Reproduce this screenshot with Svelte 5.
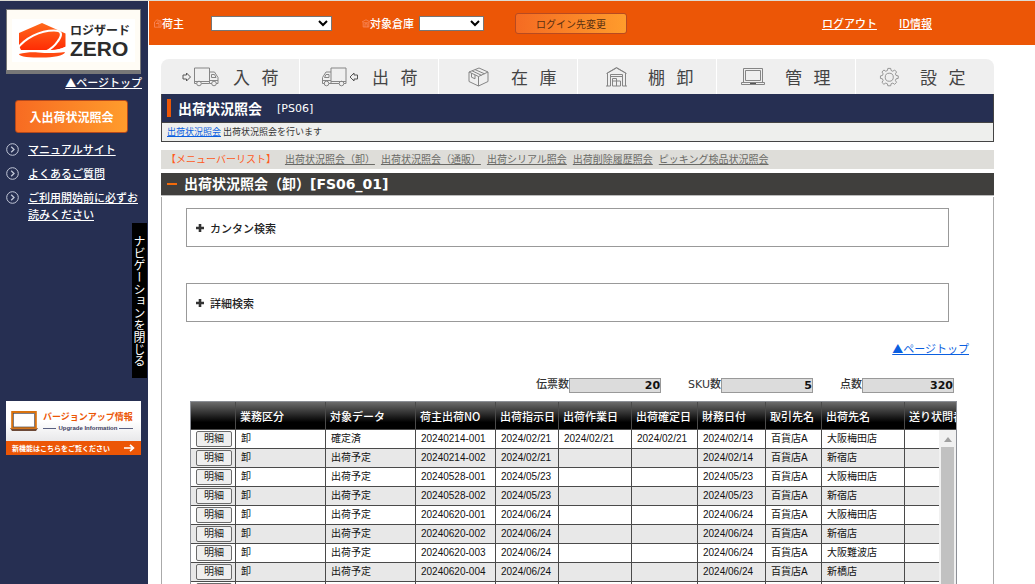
<script>
  // iconWidth sets how far the label sits from the left edge of its tab
  const tabs = [
    { icon: 'inbound', label: '入   荷', iconWidth: 40 },
    { icon: 'outbound', label: '出   荷', iconWidth: 40 },
    { icon: 'stock', label: '在   庫', iconWidth: 40 },
    { icon: 'shelf', label: '棚   卸', iconWidth: 38 },
    { icon: 'manage', label: '管   理', iconWidth: 36 },
    { icon: 'setting', label: '設   定', iconWidth: 32 }
  ]

  const sideLinks = [
    'マニュアルサイト',
    'よくあるご質問',
    'ご利用開始前に必ずお読みください'
  ]

  const menuLinks = [
    '出荷状況照会（卸）',
    '出荷状況照会（通販）',
    '出荷シリアル照会',
    '出荷削除履歴照会',
    'ピッキング検品状況照会'
  ]

  const totals = [
    { id: 'slips', label: '伝票数', value: '20' },
    { id: 'sku', label: 'SKU数', value: '5' },
    { id: 'pieces', label: '点数', value: '320' }
  ]

  const columns = [
    { title: '', width: 45 },
    { title: '業務区分', width: 90 },
    { title: '対象データ', width: 90 },
    { title: '荷主出荷NO', width: 80 },
    { title: '出荷指示日', width: 63 },
    { title: '出荷作業日', width: 73 },
    { title: '出荷確定日', width: 66 },
    { title: '財務日付', width: 68 },
    { title: '取引先名', width: 56 },
    { title: '出荷先名', width: 83 },
    { title: '送り状問番号', width: null }
  ]

  // kind, state, order no, instructed, worked, confirmed, finance, customer, destination, slip no
  const rows = [
    ['卸', '確定済', '20240214-001', '2024/02/21', '2024/02/21', '2024/02/21', '2024/02/14', '百貨店A', '大阪梅田店', ''],
    ['卸', '出荷予定', '20240214-002', '2024/02/21', '', '', '2024/02/14', '百貨店A', '新宿店', ''],
    ['卸', '出荷予定', '20240528-001', '2024/05/23', '', '', '2024/05/23', '百貨店A', '大阪梅田店', ''],
    ['卸', '出荷予定', '20240528-002', '2024/05/23', '', '', '2024/05/23', '百貨店A', '新宿店', ''],
    ['卸', '出荷予定', '20240620-001', '2024/06/24', '', '', '2024/06/24', '百貨店A', '大阪梅田店', ''],
    ['卸', '出荷予定', '20240620-002', '2024/06/24', '', '', '2024/06/24', '百貨店A', '新宿店', ''],
    ['卸', '出荷予定', '20240620-003', '2024/06/24', '', '', '2024/06/24', '百貨店A', '大阪難波店', ''],
    ['卸', '出荷予定', '20240620-004', '2024/06/24', '', '', '2024/06/24', '百貨店A', '新橋店', ''],
    ['', '', '', '', '', '', '', '', '', '']
  ]
</script>

<div class="page">
  <aside class="sidebar">
    <a class="logo" href="#top" aria-label="ロジザードZERO">
      <svg viewBox="0 0 123 43" width="123" height="43">
        <defs>
          <linearGradient id="logo-fill" x1="0" y1="0" x2="0" y2="1">
            <stop offset="0" stop-color="#ff6a1c" />
            <stop offset="1" stop-color="#ff2c04" />
          </linearGradient>
        </defs>
        <rect width="123" height="43" fill="#fff" />
        <path d="M7 14 30 4l23.500 10.500V28c-4 2-9 3-14 3H9L7 27Z" fill="url(#logo-fill)" />
        <path
          d="M5 30C13 19 28 11.500 42 11.500c9 0 8 5 4 10.500-3 4.500-7 8-12 10.500"
          fill="none"
          stroke="#fff"
          stroke-width="2.200"
        />
        <path d="M33 32.500c8-1 15-2 22-5.500v6H33Z" fill="#fff" />
        <path d="M7 35c6-1.500 13-2 19-1.500 9 .8 17 1 27-.5-1 4-12 5.500-23 5.500S7 38 7 35Z" fill="#ff4a12" />
        <text x="58" y="16" class="logo-kana">ロジザード</text>
        <text x="58" y="37" class="logo-zero">ZERO</text>
      </svg>
    </a>
    <a class="page-top" href="#top">▲ページトップ</a>
    <button class="side-button">入出荷状況照会</button>
    <ul class="side-links">
      {#each sideLinks as link}
        <li>
          <svg viewBox="0 0 13 13" width="13" height="13">
            <circle cx="6.5" cy="6.5" r="5.8" fill="none" stroke="#c3c8d8" />
            <path d="M5.2 3.8 8 6.5 5.2 9.2" fill="none" stroke="#c3c8d8" stroke-width="1.3" />
          </svg>
          <a href="#help">{link}</a>
        </li>
      {/each}
    </ul>
    <button class="nav-close">ナビゲーションを閉じる</button>
    <a class="banner" href="#upgrade">
      <span class="banner-top">
        <svg viewBox="0 0 28 20" width="28" height="20">
          <rect x="2.2" y="1" width="23.6" height="16" fill="#fff" stroke="#d9730f" stroke-width="2" />
          <rect x="3.6" y="2.4" width="20.8" height="13.6" fill="#fff" stroke="#4a4a55" stroke-width=".7" />
          <path d="M0 17h28l-2 3H2Z" fill="#6d4a38" />
          <path d="M1 17.4h26" stroke="#e07a1a" />
        </svg>
        <span class="banner-text">
          <b>バージョンアップ情報</b>
          <small>Upgrade Information</small>
        </span>
      </span>
      <span class="banner-bottom">
        新機能はこちらをご覧ください
        <svg viewBox="0 0 11 8" width="11" height="8">
          <path d="M0 4h9M6 .8 9.4 4 6 7.2" fill="none" stroke="#fff" stroke-width="1.7" />
        </svg>
      </span>
    </a>
  </aside>

  <div class="main">
    <header class="header">
      <label for="owner">
        <svg viewBox="0 0 8 9" width="8" height="9">
          <path d="M.5 3 3 .8 7 2.2v6H.5ZM2 4.5h3v3.4M3 3h3.5" fill="none" stroke="#fa8c62" stroke-width=".8" />
        </svg>荷主
      </label>
      <select id="owner" class="owner"><option></option></select>
      <label for="warehouse">
        <svg viewBox="0 0 8 9" width="8" height="9">
          <path d="M0 3 4 .8 8 3M1.2 3v5h5.6V3M3 8V4.8h2.2V8M2 3.8h4" fill="none" stroke="#fa8c62" stroke-width=".8" />
        </svg>対象倉庫
      </label>
      <select id="warehouse" class="warehouse"><option></option></select>
      <button class="switch">ログイン先変更</button>
      <nav class="account">
        <a href="#logout">ログアウト</a>
        <a href="#id">ID情報</a>
      </nav>
    </header>

    <main class="content">
      <nav class="tabs">
        {#each tabs as tab}
          <a href="#{tab.icon}">
            <svg viewBox="0 0 {tab.iconWidth} 22" width={tab.iconWidth} height="22">
              {#if tab.icon === 'inbound'}
                <path d="M2 9h3.500V7L9.500 11l-4 4v-2H2Z" stroke="#555" />
                <path d="M15.500 17.500H13.500V2h15v15.500H20.500M28.500 6h5l3.500 5.500v6h-2M28.500 17.500h2.500M30.500 8.500h3l1.500 3h-4.500ZM28.500 14.500H37M13.500 15.500h15" />
                <circle cx="18" cy="17.500" r="2.300" />
                <circle cx="33" cy="17.500" r="2.300" />
              {:else if tab.icon === 'outbound'}
                <path d="M37.500 9H34V7l-4 4 4 4v-2h3.500Z" stroke="#555" />
                <path d="M24 17.500h2V2H11v15.500h8M11 6H6l-3.500 5.500v6h2M11 17.500H9M9 8.500H6l-1.500 3H9ZM11 14.500H2.500M26 15.500H11" />
                <circle cx="21.500" cy="17.500" r="2.300" />
                <circle cx="6.500" cy="17.500" r="2.300" />
              {:else if tab.icon === 'stock'}
                <path d="M10 6 20 2l9 4v9.500L19.500 20 10 15.500ZM10 6l9.500 4.500L29 6M19.500 10.500V20M13 4.800l9.500 4.500M16 3.600l9.500 4.200M12.500 7.200v4l3.500 1.600V8.800" />
              {:else if tab.icon === 'shelf'}
                <path d="M9.500 20V7L18.500 2l9 5v13M8.500 7.500l10-6 10 6M12.500 20V8.500h12V20M8 20h4.500M24.500 20h4.500M12.500 10.500h12M14.500 20v-5h8v5ZM18.500 15v5M14.500 15v-2.500h4v2.500" />
              {:else if tab.icon === 'manage'}
                <path d="M6.500 16.500v-14h19v14M8.500 14.500v-10h15v10Z" />
                <path d="M4.500 16.500h23v2h-23Z" />
                <path d="M13 17.500h6" stroke="#555" />
              {:else}
                <g transform="translate(1.500 .3) scale(.84)">
                  <path d="m12.300 2.500h3.400l.5 2.500 2 .9 2.200-1.500 2.300 2.400-1.400 2.200.8 1.900 2.600.5v3l-2.600.5-.8 2 1.400 2.200-2.300 2.300-2.200-1.400-2 .8-.5 2.400h-3.400l-.5-2.400-2-.8-2.200 1.400-2.300-2.300 1.400-2.200-.8-2-2.400-.5v-3l2.400-.500.8-1.900L5.300 6.800l2.300-2.400 2.200 1.500 2-.9Z" />
                  <circle cx="14" cy="13" r="4.800" />
                </g>
              {/if}
            </svg>
            <span>{tab.label}</span>
          </a>
        {/each}
      </nav>

      <section class="title-box">
        <h1>出荷状況照会 <span>[PS06]</span></h1>
        <p><a href="#ps06">出荷状況照会</a> 出荷状況照会を行います</p>
      </section>

      <nav class="menu-bar">
        <span>【メニューバーリスト】</span>
        {#each menuLinks as link}
          <a href="#menu">{link}</a>
        {/each}
      </nav>

      <h2><i></i>出荷状況照会（卸）[FS06_01]</h2>

      <section class="panel">
        {#each ['カンタン検索', '詳細検索'] as name}
          <button class="search">
            <svg viewBox="0 0 8 8" width="8" height="8">
              <path d="M4 0v8M0 4h8" stroke="#333" stroke-width="2.600" />
            </svg>
            {name}
          </button>
        {/each}

        <a class="page-top blue" href="#top">▲ページトップ</a>

        <div class="totals">
          {#each totals as total}
            <div>
              <label for={total.id}>{total.label}</label>
              <input id={total.id} value={total.value} readonly />
            </div>
          {/each}
        </div>

        <div class="grid">
          <table>
            <colgroup>
              {#each columns as col}
                <col style={col.width ? `width: ${col.width}px` : ''} />
              {/each}
            </colgroup>
            <thead>
              <tr>
                {#each columns as col}
                  <th>{col.title}</th>
                {/each}
              </tr>
            </thead>
            <tbody>
              {#each rows as row}
                <tr>
                  <td><button class="detail" aria-label="明細">{row[0] ? '明細' : ''}</button></td>
                  {#each row as cell}
                    <td>{cell}</td>
                  {/each}
                </tr>
              {/each}
            </tbody>
          </table>
          <div class="scrollbar">
            <svg viewBox="0 0 8 5" width="8" height="5"><path d="M4 0 8 5H0Z" fill="#a0a0a0" /></svg>
            <span></span>
          </div>
        </div>
      </section>
    </main>
  </div>
</div>

<style>
  :global(body) {
    margin: 0;
    background: #fff;
  }

  .page {
    --navy: #262f52;
    --orange: #ec5606;
    --cjk: 'Noto Sans CJK JP', sans-serif;
    display: flex;
    gap: 1px;
    height: 100vh;
    overflow: hidden;
    box-sizing: border-box;
    border-top: 1px solid #dcdcd4;
    font-family: var(--cjk);
    font-size: 11px;
    line-height: 16px;
    color: #333;
  }

  button,
  input,
  select {
    box-sizing: border-box;
    font-family: inherit;
  }

  ul,
  h1,
  h2,
  p {
    margin: 0;
    padding: 0;
  }

  /* sidebar */
  .sidebar {
    flex: none;
    display: flex;
    flex-direction: column;
    width: 148px;
    background: var(--navy);
  }

  .logo {
    display: flex;
    justify-content: center;
    margin: 8px 7px 0 6px;
    padding: 9px 0 8px;
    background: #fffcf5;
    border: 1px solid #777;
    border-bottom-width: 4px;
  }

  .logo-kana {
    font: bold 12px var(--cjk);
    fill: #2c2c2c;
  }

  .logo-zero {
    font: bold 21px 'Liberation Sans', sans-serif;
    fill: #2c2c2c;
  }

  .page-top {
    align-self: flex-end;
    margin-right: 6px;
    color: #fff;
    font-weight: 500;
  }

  .side-button {
    height: 33px;
    margin: 10px 20px 0 15px;
    padding: 0;
    color: #fff;
    font-size: 12px;
    font-weight: bold;
    background: linear-gradient(90deg, #f76b22, #ff9c2c);
    border: 1px solid #b5491c;
    border-radius: 3px;
  }

  .side-links {
    display: flex;
    flex-direction: column;
    gap: 7px;
    padding: 8px 8px 0 6px;
    line-height: 17px;
    list-style: none;
  }

  .side-links li {
    display: flex;
    gap: 9px;
  }

  .side-links svg {
    flex: none;
    margin-top: 2px;
  }

  .side-links a {
    color: #fff;
    font-weight: 500;
  }

  .nav-close {
    align-self: flex-end;
    width: 15px;
    height: 155px;
    margin-right: 1px;
    padding: 0;
    color: #fff;
    font-size: 12px;
    line-height: 15px;
    writing-mode: vertical-rl;
    background: #000;
    border: 0;
  }

  .banner {
    margin: 23px 7px 0 6px;
    text-decoration: none;
  }

  .banner-top {
    display: flex;
    align-items: center;
    gap: 5px;
    height: 40px;
    padding-left: 4px;
    background: linear-gradient(#fff, #fff 50%, #e8e8ea);
  }

  .banner-text {
    display: flex;
    flex-direction: column;
    color: var(--orange);
    font-size: 9px;
    line-height: 14px;
    white-space: nowrap;
  }

  .banner-text small {
    display: flex;
    align-items: center;
    gap: 2px;
    color: #3b4060;
    font: bold 6px/8px 'Liberation Sans', sans-serif;
  }

  .banner-text small::before,
  .banner-text small::after {
    content: '';
    flex: 1;
    height: 1px;
    background: #5a6080;
  }

  .banner-bottom {
    display: flex;
    align-items: center;
    justify-content: space-between;
    height: 14px;
    padding: 0 6px;
    color: #fff;
    font-size: 7px;
    font-weight: bold;
    line-height: 14px;
    background: var(--orange);
  }

  /* header */
  .main {
    flex: 1;
    min-width: 0;
    display: flex;
    flex-direction: column;
  }

  .header {
    flex: none;
    display: flex;
    align-items: center;
    height: 44px;
    padding-left: 5px;
    color: #fff;
    font-weight: 500;
    background: var(--orange);
  }

  .header label {
    display: flex;
    align-items: center;
  }

  .header select {
    height: 15px;
    padding: 0;
    background: #fff;
    border: 1px solid #767676;
    border-radius: 0;
  }

  .owner {
    width: 121px;
    margin: 0 30px 0 27px;
  }

  .warehouse {
    width: 65px;
    margin: 0 31px 0 5px;
  }

  .switch {
    width: 112px;
    height: 21px;
    padding: 0;
    color: #5b3010;
    font-size: 10px;
    background: linear-gradient(90deg, #f56b22, #ff9c2c);
    border: 1px solid #b84a20;
    border-radius: 3px;
  }

  .account {
    display: flex;
    gap: 22px;
    margin: 0 103px 0 auto;
  }

  .account a {
    color: #fff;
  }

  /* content */
  .content {
    flex: 1;
    display: flex;
    flex-direction: column;
    padding: 14px 41px 0 12px;
  }

  .tabs {
    flex: none;
    display: flex;
    gap: 1px;
    height: 35px;
    border-radius: 8px 8px 0 0;
    overflow: hidden;
  }

  .tabs a {
    flex: 1;
    display: flex;
    align-items: center;
    gap: 12px;
    padding-left: 20px;
    color: #444;
    font-size: 17px;
    text-decoration: none;
    white-space: pre;
    background: #efefef;
  }

  .tabs svg {
    fill: none;
    stroke: #858585;
    stroke-width: 1;
  }

  .title-box {
    background: #eeefed;
    border: 1px solid #444;
    border-top: 0;
  }

  h1 {
    display: flex;
    align-items: center;
    gap: 15px;
    height: 28px;
    padding-left: 5px;
    color: #fff;
    font-size: 14px;
    background: var(--navy);
    border-bottom: 1px solid #444;
  }

  h1::before {
    content: '';
    width: 4px;
    height: 18px;
    margin-right: -8px;
    background: var(--orange);
  }

  h1 span {
    font: 11px 'DejaVu Sans', sans-serif;
  }

  .title-box p {
    padding: 0 5px;
    font-size: 9px;
    line-height: 18px;
  }

  .title-box a,
  .blue {
    color: #0b5fe0;
  }

  .menu-bar {
    display: flex;
    gap: 6px;
    height: 19px;
    margin-top: 8px;
    padding-left: 5px;
    font-size: 10px;
    line-height: 18px;
    white-space: nowrap;
    background: #deddd9;
  }

  .menu-bar span {
    margin-right: 3px;
    color: #ff5a1c;
  }

  .menu-bar a {
    color: #6a6a66;
  }

  h2 {
    display: flex;
    align-items: center;
    gap: 7px;
    height: 22px;
    margin-top: 4px;
    padding-left: 6px;
    color: #fff;
    font: bold 14px/22px 'DejaVu Sans', 'Noto Sans CJK JP', sans-serif;
    background: #403f3d;
    border-bottom: 1px solid #bbb;
  }

  h2 i {
    width: 10px;
    height: 2px;
    background: #f26a0a;
  }

  .panel {
    flex: 1;
    display: flex;
    flex-direction: column;
    margin-top: 1px;
    padding: 11px 24px 0;
    border: solid #aaa;
    border-width: 0 1px;
  }

  .search {
    display: flex;
    align-items: center;
    gap: 6px;
    height: 39px;
    margin: 0 20px 36px 0;
    padding: 0 9px;
    color: #222;
    font-size: 11px;
    font-weight: 500;
    background: #fff;
    border: 1px solid #999;
  }

  .blue {
    margin: -18px 0 0;
    font-weight: normal;
  }

  .totals {
    display: flex;
    justify-content: flex-end;
    gap: 27px;
    margin: 21px 15px 8px 0;
  }

  .totals div {
    display: flex;
    align-items: center;
    font-family: 'DejaVu Sans', 'Noto Sans CJK JP', sans-serif;
    font-weight: 500;
  }

  .totals input {
    width: 92px;
    height: 15px;
    padding: 0;
    color: #111;
    font: bold 11px 'DejaVu Sans', sans-serif;
    text-align: right;
    background: #dcdcdc;
    border: 1px solid #999;
  }

  /* shipment list */
  .grid {
    flex: 1;
    position: relative;
    margin: 0 12px 0 4px;
    border: 1px solid #8c8f96;
    border-bottom: 0;
    overflow: hidden;
  }

  table {
    width: 100%;
    table-layout: fixed;
    border-collapse: separate;
    border-spacing: 0;
  }

  th,
  td {
    box-sizing: border-box;
    padding: 0 0 0 4px;
    border-right: 1px solid #4a4a4a;
    border-bottom: 1px solid #4a4a4a;
    overflow: hidden;
    text-align: left;
    white-space: nowrap;
  }

  th {
    height: 28px;
    color: #fff;
    font-weight: 500;
    background: linear-gradient(#6c6c6c, #000 75%);
  }

  td {
    height: 19px;
    padding-left: 5px;
    font: 10px/16px 'Liberation Sans', 'Noto Sans CJK JP', sans-serif;
    color: #111;
  }

  tbody tr:nth-child(even) td {
    background: #e8e8e8;
  }

  th:last-child,
  td:last-child {
    border-right: 0;
  }

  .detail {
    display: block;
    width: 36px;
    height: 16px;
    padding: 0;
    color: #222;
    font-size: 10px;
    line-height: 14px;
    background: #efefef;
    border: 1px solid #6b6b6b;
    border-radius: 2px;
  }

  .scrollbar {
    position: absolute;
    top: 28px;
    right: 0;
    bottom: 0;
    display: flex;
    flex-direction: column;
    align-items: center;
    gap: 5px;
    width: 17px;
    padding-top: 7px;
    box-sizing: border-box;
    background: #f1f1f1;
  }

  .scrollbar span {
    flex: 1;
    width: 13px;
    background: #c1c1c1;
  }
</style>
